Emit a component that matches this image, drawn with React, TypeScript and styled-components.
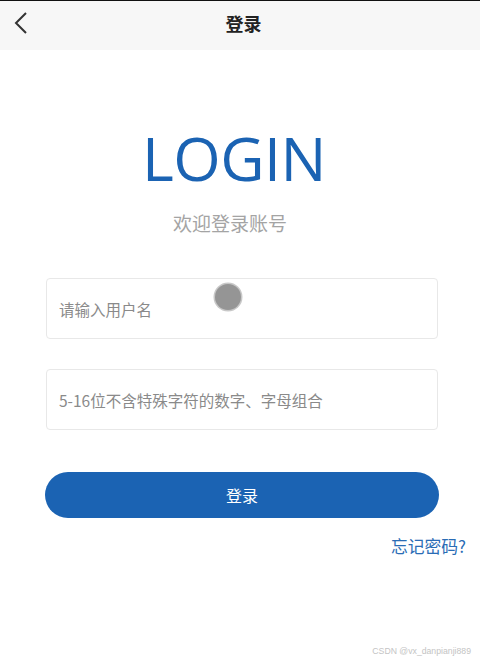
import React from "react";
import styled, { createGlobalStyle } from "styled-components";

const Global = createGlobalStyle`
  html, body { margin: 0; padding: 0; background: #ffffff; }
  body { font-family: "Noto Sans CJK SC", "Open Sans", sans-serif; }
  * { box-sizing: border-box; }
`;

const Page = styled.div`
  width: 480px;
  height: 663px;
  position: relative;
  background: #fff;
  border-top: 1px solid #111;
  display: flex;
  flex-direction: column;
  overflow: hidden;
`;

const NavBar = styled.header`
  height: 49px;
  background: #f7f7f7;
  display: grid;
  grid-template-columns: 60px 1fr 60px;
  align-items: center;
  padding-bottom: 5px;
`;

const BackButton = styled.button`
  border: 0;
  background: transparent;
  padding: 0 0 0 14px;
  display: flex;
  align-items: center;
  cursor: pointer;
`;

const NavTitle = styled.h1`
  margin: 0;
  padding-left: 7px;
  text-align: center;
  font-size: 18px;
  line-height: 24px;
  font-weight: 700;
  color: #222;
  font-family: "Noto Sans CJK SC", sans-serif;
`;

const Content = styled.main`
  display: flex;
  flex-direction: column;
  padding: 0 41px 0 45px;
`;

const Heading = styled.div`
  padding-right: 16px;
  text-align: center;
`;

const Logo = styled.div`
  margin-top: 68px;
  font-family: "Open Sans", sans-serif;
  font-size: 61px;
  line-height: 80px;
  color: #1b63b3;
  font-weight: 400;
  letter-spacing: -0.5px;
`;

const Welcome = styled.div`
  margin-top: 13px;
  padding-right: 8px;
  font-size: 19px;
  line-height: 24px;
  color: #a4a4a4;
`;

const Form = styled.div`
  margin-top: 43px;
  display: flex;
  flex-direction: column;
  gap: 30px;
  padding: 0 1px;
`;

const Field = styled.div`
  position: relative;
  height: 61px;
  border: 1px solid #e8e8e8;
  border-radius: 4px;
  display: flex;
  align-items: center;
  padding-left: 12px;
`;

const Input = styled.input`
  border: 0;
  outline: none;
  padding: 0;
  background: transparent;
  width: 100%;
  font-family: "Noto Sans CJK SC", sans-serif;
  font-size: 15.5px;
  color: #333;
  &::placeholder { color: #8a8a8a; }
`;

const TouchDot = styled.span`
  position: absolute;
  left: 168px;
  top: 5px;
  width: 26px;
  height: 26px;
  border-radius: 50%;
  background: #959595;
  box-shadow: 0 0 0 1.5px #c8c8c8;
`;

const SubmitButton = styled.button`
  margin-top: 42px;
  height: 46px;
  border: 0;
  border-radius: 23px;
  background: #1b63b3;
  color: #fff;
  font-family: "Noto Sans CJK SC", sans-serif;
  font-size: 16px;
  cursor: pointer;
`;

const Forgot = styled.a`
  margin-top: 17px;
  margin-right: -27px;
  align-self: flex-end;
  font-size: 16.8px;
  line-height: 22px;
  color: #2a6cb5;
  text-decoration: none;
`;

const Watermark = styled.div`
  position: absolute;
  right: 9px;
  bottom: 7px;
  font-family: "Liberation Sans", sans-serif;
  font-size: 8.7px;
  color: #c4c4c4;
`;

export default function App() {
  return (
    <>
      <Global />
      <Page>
        <NavBar>
          <BackButton aria-label="back">
            <svg width="14" height="22" viewBox="0 0 14 22">
              <path d="M12 1 L2 11 L12 21" fill="none" stroke="#333" strokeWidth="2" />
            </svg>
          </BackButton>
          <NavTitle>登录</NavTitle>
          <span />
        </NavBar>
        <Content>
          <Heading>
            <Logo>LOGIN</Logo>
            <Welcome>欢迎登录账号</Welcome>
          </Heading>
          <Form>
            <Field>
              <Input placeholder="请输入用户名" />
              <TouchDot />
            </Field>
            <Field>
              <Input type="password" placeholder="5-16位不含特殊字符的数字、字母组合" />
            </Field>
          </Form>
          <SubmitButton>登录</SubmitButton>
          <Forgot href="#">忘记密码?</Forgot>
        </Content>
        <Watermark>CSDN @vx_danpianji889</Watermark>
      </Page>
    </>
  );
}
